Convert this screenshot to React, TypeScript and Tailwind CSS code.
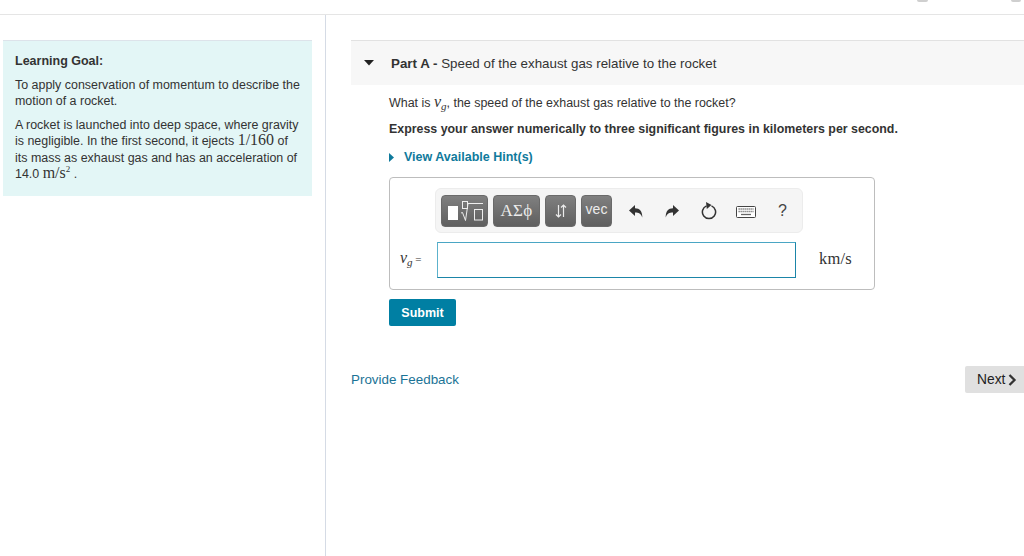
import React from "react";

const math = "font-['Liberation_Serif',serif]";

function VarG({ size }: { size: string }) {
  return (
    <i className={`font-['Liberation_Serif',serif] ${size} leading-none whitespace-nowrap`}>
      v<span className="text-[11px] leading-none relative top-[3px]">g</span>
    </i>
  );
}

function ToolBtn({ w, children }: { w: string; children: React.ReactNode }) {
  return (
    <div className={`${w} h-[32px] rounded-[4px] bg-gradient-to-b from-[#808080] to-[#5f5f5f] flex items-center justify-center text-[#ececec] border border-[#6a6a6a]`}>
      {children}
    </div>
  );
}

export default function App() {
  return (
    <div className="w-[1024px] h-[556px] bg-white overflow-hidden relative font-['Liberation_Sans',Arial,sans-serif] text-[#333]">
      <div className="absolute top-0 left-[917px] w-[11px] h-[2px] bg-[#cfcfcf] rounded-b-full" />
      <div className="absolute top-0 left-[1011px] w-[10px] h-[2px] bg-[#cfcfcf] rounded-b-full" />
      <div className="pt-[14px] h-full">
        <div className="flex h-[542px] border-t border-[#e5e5e5]">
          {/* Left */}
          <div className="w-[326px] shrink-0 border-r border-[#d5dbe5] pt-[25px] pl-[3px] pr-[13px]">
            <div className="bg-[#e3f6f6] border-t border-[#dde3ea] h-[156px] pl-[12px] pr-[11px] pt-[12px] text-[12.45px] leading-[15.6px]">
              <p className="font-bold text-[12.5px] leading-[16px]">Learning Goal:</p>
              <p className="mt-[9px]">To apply conservation of momentum to describe the motion of a rocket.</p>
              <p className="mt-[8px] leading-[16.2px]">
                A rocket is launched into deep space, where gravity is negligible. In the first second, it ejects{" "}
                <span className={`${math} text-[16px] leading-[14px]`}>1/160</span> of its mass as exhaust gas and has an acceleration of{" "}
                14.0 <span className={`${math} text-[16px] leading-[14px]`}>m/s<span className="text-[9px] leading-none relative -top-[6px]">2</span></span> .
              </p>
            </div>
          </div>
          {/* Right */}
          <div className="flex-1 min-w-0 pt-[25px] pl-[25px]">
            <div className="h-[45px] bg-[#f7f7f7] border-t border-[#e2e2e2] flex items-center pl-[13px] pt-[3px]">
              <svg width="10" height="6" viewBox="0 0 10 6" className="mr-[17px] -mt-[3px]"><path d="M0 0h10L5 5.5z" fill="#222" /></svg>
              <span className="text-[13.35px] font-bold">Part A -&nbsp;</span>
              <span className="text-[13.35px]">Speed of the exhaust gas relative to the rocket</span>
            </div>
            <div className="pl-[38px]">
              <p className="mt-[9px] h-[18px] text-[12.45px] leading-[18px] whitespace-nowrap">
                What is <VarG size="text-[16px]" />, the speed of the exhaust gas relative to the rocket?
              </p>
              <p className="mt-[8px] text-[12.4px] leading-[18px] font-bold whitespace-nowrap">
                Express your answer numerically to three significant figures in kilometers per second.
              </p>
              <div className="mt-[10px] flex items-center h-[18px] text-[12.5px] font-bold text-[#0f7a9c]">
                <svg width="5" height="9" viewBox="0 0 5 9" className="mr-[10px]"><path d="M0 0l5 4.5L0 9z" fill="#0f7a9c" /></svg>
                View Available Hint(s)
              </div>
              <div className="mt-[11px] w-[486px] h-[113px] rounded-[4px] border border-[#bdbdbd] pt-[10px] pl-[45px]">
                <div className="w-[368px] h-[45px] rounded-[6px] bg-[#f5f5f5] border border-[#ececec] flex items-center pl-[5px]">
                  <div className="flex gap-[5px]">
                    <ToolBtn w="w-[47px]">
                      <svg width="45" height="30" viewBox="0 0 45 30">
                        <rect x="6" y="10" width="10" height="14" fill="#fff" />
                        <rect x="20.5" y="5.500" width="5" height="7" fill="none" stroke="#eee" strokeWidth="1" />
                        <path d="M19 17l1.500-.5 3 8L26 7.500H41" fill="none" stroke="#eee" strokeWidth="1" />
                        <rect x="32.500" y="13.500" width="8" height="10.500" fill="none" stroke="#eee" strokeWidth="1" />
                      </svg>
                    </ToolBtn>
                    <ToolBtn w="w-[47px]"><span className="font-['Liberation_Serif',serif] text-[17px] tracking-[0.3px]">ΑΣϕ</span></ToolBtn>
                    <ToolBtn w="w-[31px]">
                      <svg width="12" height="14" viewBox="0 0 12 14" fill="none" stroke="#ececec" strokeWidth="1.2"><path d="M3.5 1v12M1 10.5L3.5 13 6 10.5M8.500 13V1M6 3.500L8.500 1 11 3.500" /></svg>
                    </ToolBtn>
                    <ToolBtn w="w-[31px]"><span className="text-[14px] -mt-[2px]">vec</span></ToolBtn>
                  </div>
                  <div className="flex items-center ml-[17px]">
                    <svg width="14" height="13" viewBox="0 0 14 13" className="mt-[1px]"><path d="M6 0v3.3c4.7 0 7.4 3 7.3 9.2C12 8.8 9.8 7.6 6 7.6V11L0 5.5z" fill="#333" /></svg>
                    <svg width="14" height="13" viewBox="0 0 14 13" className="ml-[22px] mt-[1px]"><path d="M8 0v3.3C3.3 3.3.6 6.3.7 12.5 2 8.8 4.2 7.6 8 7.6V11l6-5.500z" fill="#333" /></svg>
                    <svg width="16" height="18" viewBox="0 0 16 18" fill="none" className="ml-[22px]"><path d="M10.500 3.900A6.600 6.600 0 1 1 5.500 3.900" stroke="#333" strokeWidth="1.500" /><path d="M5 0l5.500 3L5.800 7z" fill="#333" /></svg>
                    <svg width="20" height="12" viewBox="0 0 20 12" className="ml-[19px] mt-[3px]"><rect x=".5" y=".5" width="19" height="11" rx="1" fill="#fff" stroke="#444" /><path d="M2.500 3h15M2.500 5.500h15" stroke="#777" strokeWidth="1.300" strokeDasharray="1.300 .7" /><path d="M5 8.500h10" stroke="#666" strokeWidth="1.300" /></svg>
                    <span className="ml-[22px] text-[16px] text-[#444]">?</span>
                  </div>
                </div>
                <div className="flex items-center mt-[9px] -ml-[35px]">
                  <span className="w-[37px] pb-[2px] text-[11px] font-['Liberation_Serif',serif] text-[#333] whitespace-nowrap">
                    <VarG size="text-[16px]" /> =
                  </span>
                  <div className="w-[359px] h-[36px] border border-[#1b85a8] border-l-[#5cb2cc] border-t-[#4aa6c4] bg-white" />
                  <span className={`ml-[23px] pb-[2px] ${math} text-[16.5px] tracking-[0.2px]`}>km/s</span>
                </div>
              </div>
              <button className="mt-[9px] pt-[1px] block w-[67px] h-[27px] rounded-[2px] bg-[#007fa3] text-white text-[12.5px] font-bold">Submit</button>
            </div>
            <div className="mt-[40px] flex items-center justify-between">
              <span className="pt-[2px] text-[13.4px] text-[#1a7396]">Provide Feedback</span>
              <div className="w-[59px] h-[27px] pt-[1px] bg-[#e0e0e0] rounded-l-[2px] flex items-center pl-[12px] text-[13.8px] text-[#222]">
                Next
                <svg width="9" height="12" viewBox="0 0 9 12" className="ml-[3px] -mt-[1px]"><path d="M1.500 1l5 5-5 5" fill="none" stroke="#333" strokeWidth="2.300" /></svg>
              </div>
            </div>
          </div>
        </div>
      </div>
    </div>
  );
}
